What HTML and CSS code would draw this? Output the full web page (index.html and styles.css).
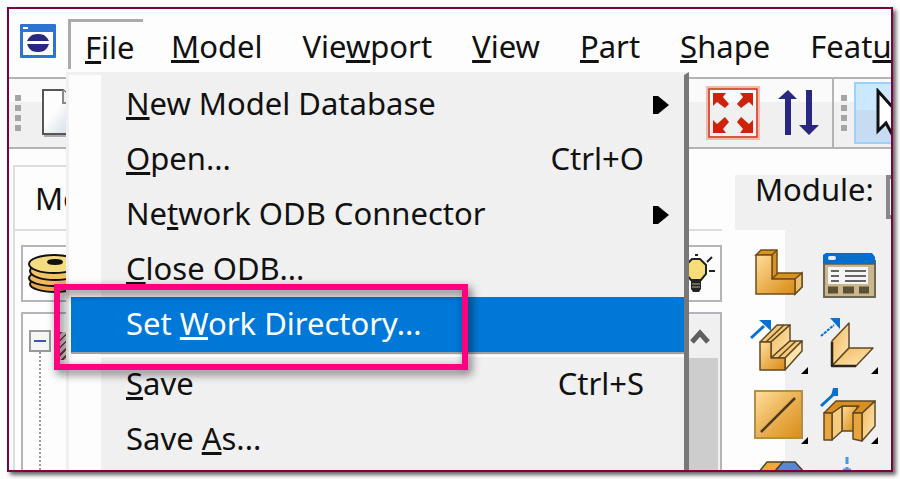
FILE: index.html
```html
<!DOCTYPE html>

<html lang="en">
  <head>
    <meta charset="utf-8" />
    <title>File menu</title>
    <link rel="stylesheet" href="styles.css">
  </head>
  <body>
    <div class="window">
      <div class="title-edge"></div>

      <nav class="menubar">
        <svg class="app-icon" width="36" height="34" viewBox="0 0 36 34">
          <rect width="36" height="34" rx="1" fill="#2d74d0"/>
          <rect x="3" y="8" width="30" height="23" fill="#fdfdfd"/>
          <rect x="3" y="3" width="5" height="2" fill="#fff"/>
          <path d="M7 17 Q8 14 12 11 Q18 9 24 11 Q28 14 29 17Z M7 20 Q8 24 12 27 Q18 29 24 27 Q28 24 29 20Z" fill="#29277f"/>
        </svg>
        <div class="menu-open">
          <button class="menu-title"><u>F</u>ile</button>
          <div class="dropdown">
            <button class="item"><span><u>N</u>ew Model Database</span><svg class="sub" width="16" height="18" viewBox="0 0 16 18"><path d="M0 0H5L16 9L5 18H0Z"/></svg></button>
            <button class="item"><span><u>O</u>pen...</span><span>Ctrl+O</span></button>
            <button class="item"><span>Ne<u>t</u>work ODB Connector</span><svg class="sub" width="16" height="18" viewBox="0 0 16 18"><path d="M0 0H5L16 9L5 18H0Z"/></svg></button>
            <button class="item"><span><u>C</u>lose ODB...</span></button>
            <div class="item-wrap">
              <button class="item selected"><span>Set <u>W</u>ork Directory...</span></button>
              <div class="callout"></div>
            </div>
            <div class="separator"></div>
            <button class="item"><span><u>S</u>ave</span><span>Ctrl+S</span></button>
            <button class="item"><span>Save <u>A</u>s...</span></button>
          </div>
        </div>
        <button class="menu-title"><u>M</u>odel</button>
        <button class="menu-title">Vie<u>w</u>port</button>
        <button class="menu-title"><u>V</u>iew</button>
        <button class="menu-title"><u>P</u>art</button>
        <button class="menu-title"><u>S</u>hape</button>
        <button class="menu-title">Feat<u>u</u>re</button>
      </nav>

      <div class="toolbar">
        <div class="tools-file">
          <span class="grip"></span>
          <button class="tool" aria-label="New">
            <svg width="40" height="50" viewBox="0 0 40 50">
              <defs><linearGradient id="paper" x1="0" y1="0" x2="1" y2="1"><stop offset=".4" stop-color="#fdfdfd"/><stop offset="1" stop-color="#c8d4e2"/></linearGradient></defs>
              <path d="M2 2H22L36 16V46H2Z" fill="url(#paper)" stroke="#555" stroke-width="2"/>
              <path d="M22 2V15H36" fill="#eee" stroke="#888" stroke-width="2"/>
              <path d="M3 48H38" stroke="#aaa" stroke-width="2"/>
            </svg>
          </button>
        </div>
        <div class="tools-view">
          <button class="tool" aria-label="Fit view">
            <svg width="54" height="54" viewBox="0 0 54 54">
              <rect x="2" y="2" width="50" height="50" fill="none" stroke="#f7b9ac" stroke-width="4"/>
              <rect x="3" y="3" width="48" height="48" fill="none" stroke="#cc3a22" stroke-width="1.5"/>
              <g fill="#cc240a">
                <path d="M7 7H20L17 11L23 18L19 22L11 16L7 20Z"/>
                <path d="M47 7H34L37 11L31 18L35 22L43 16L47 20Z"/>
                <path d="M7 47H20L17 43L23 36L19 31L11 38L7 34Z"/>
                <path d="M47 47H34L37 43L31 36L35 31L43 38L47 34Z"/>
              </g>
            </svg>
          </button>
          <button class="tool" aria-label="Cycle view">
            <svg width="42" height="46" viewBox="0 0 42 46" fill="#29277f">
              <path d="M10 0L19 9H13V45H7V9H0Z"/>
              <path d="M28 0H34V35H41L31 45L21 35H28Z"/>
            </svg>
          </button>
        </div>
        <div class="tools-select">
          <span class="grip"></span>
          <button class="tool-active" aria-label="Select">
            <svg width="34" height="50" viewBox="0 0 34 50"><path d="M2 3V43L10 35L17 48L23 45L17 32H28Z" fill="#fff" stroke="#111" stroke-width="3"/></svg>
          </button>
        </div>
      </div>

      <div class="workspace">
        <div class="tree-side">
          <div class="tabs"><a class="tab" href="#">Model</a></div>
          <div class="tree-panel">
            <div class="tree-tools">
              <svg width="50" height="42" viewBox="0 0 50 42" stroke="#111" stroke-width="2">
                <ellipse cx="27" cy="31" rx="25" ry="8" fill="#e9aa4b"/>
                <ellipse cx="26" cy="25" rx="25" ry="8" fill="#f0b860"/>
                <ellipse cx="27" cy="18" rx="25" ry="9" fill="#f2c465"/>
                <ellipse cx="26" cy="11" rx="25" ry="9" fill="#f5dc82"/>
                <ellipse cx="27" cy="9" rx="7" ry="2" fill="#111"/>
              </svg>
              <svg width="42" height="40" viewBox="0 0 42 40">
                <path d="M14 5H22L28 11V20L23 26H13L8 20V11Z" fill="#f8dc78" stroke="#222" stroke-width="2"/>
                <path d="M13 27H23V35L21 38H15L13 35Z" fill="#222"/>
                <path d="M14 30H22M14 33H22" stroke="#aab59a" stroke-width="1"/>
                <path d="M17 1H20M29 8L34 3M31 17H37" stroke="#222" stroke-width="2"/>
              </svg>
            </div>
            <div class="tree">
              <div class="branch">
                <button class="expander" aria-label="Collapse"></button>
                <span class="stem"></span>
              </div>
              <span class="hatch"></span>
              <div class="scrollbar">
                <svg width="20" height="18" viewBox="0 0 20 18"><path d="M2 14L10 5L18 14" fill="none" stroke="#606060" stroke-width="5"/></svg>
                <div class="thumb"></div>
              </div>
            </div>
          </div>
        </div>

        <div class="module-side">
          <div class="module-bar">
            <label for="module">Module:</label>
            <select id="module"><option></option></select>
          </div>
          <div class="toolbox">
            <svg class="hidden-defs" width="0" height="0">
              <defs>
                <linearGradient id="gold" x1="0" y1="0" x2="1" y2="1"><stop offset="0" stop-color="#ffdf9c"/><stop offset=".5" stop-color="#ebb254"/><stop offset="1" stop-color="#d98b17"/></linearGradient>
                <linearGradient id="pale" x1="0" y1="0" x2="1" y2="1"><stop offset="0" stop-color="#f0b75c"/><stop offset="1" stop-color="#ffe9b8"/></linearGradient>
              </defs>
            </svg>
            <button class="part-tool" aria-label="Create part">
              <svg viewBox="0 0 70 70" stroke="#6f4c1b" stroke-width="1.5">
                <path d="M11 18L16 13H32V36H57V50L50 57V42H27V18Z" fill="#d9921f"/>
                <path d="M50 42L57 36V50L50 57Z" fill="#f0bf6b"/>
                <path d="M11 18H27V42H50V57H11Z" fill="url(#gold)"/>
                <path d="M27 18L32 13M27 42L33 36" fill="none"/>
              </svg>
            </button>
            <button class="part-tool" aria-label="Part manager">
              <svg viewBox="0 0 70 70">
                <rect x="9" y="24" width="51" height="36" fill="#c9b78e" stroke="#6e6654" stroke-width="2"/>
                <path d="M8 27V18L11 16H57L60 20V27Z" fill="#006fcf"/>
                <path d="M8 27H60" stroke="#5b5d55" stroke-width="1.5"/>
                <rect x="13" y="19" width="8" height="4" rx="2" fill="#e6f2ff"/>
                <rect x="13" y="30" width="40" height="17" fill="#f5f5f5"/>
                <path d="M16 34H24M30 34H51M16 39H24M30 39H51M16 44H24M30 44H51" stroke="#666" stroke-width="2"/>
                <path d="M13 53H23M28 53H39M44 53H54" stroke="#5a5232" stroke-width="7"/>
              </svg>
            </button>
            <button class="part-tool" aria-label="Solid extrude">
              <svg viewBox="0 0 70 70" stroke="#604824" stroke-width="1.5" stroke-linejoin="round">
                <path d="M15 35L32 18H45L26 35Z" fill="#f3c878"/>
                <path d="M26 35L45 18V34L26 51Z" fill="url(#pale)"/>
                <path d="M26 51L45 34H57L40 51Z" fill="#f5ca7b"/>
                <path d="M40 51L57 34V44L40 63Z" fill="#ffe3ab"/>
                <path d="M15 35H26V51H40V63H15Z" fill="url(#gold)"/>
                <path d="M21 35L39 18M33 51L51 34" fill="none"/>
                <path d="M6 31L19 19" stroke="#0870ce" stroke-width="3"/>
                <path d="M14 13H26V24Z" fill="#0870ce" stroke="none"/>
                <path d="M56 67L63 60V67Z" fill="#000" stroke="none"/>
              </svg>
            </button>
            <button class="part-tool" aria-label="Shell extrude">
              <svg viewBox="0 0 70 70" stroke="#604824" stroke-width="1.5" stroke-linejoin="round">
                <path d="M17 34L34 16V41L17 59Z" fill="url(#pale)"/>
                <path d="M17 59L34 41H58L41 59Z" fill="url(#pale)"/>
                <path d="M17 35V59H41" fill="none" stroke="#29251e" stroke-width="2.5"/>
                <path d="M6 29L19 18" stroke="#0870ce" stroke-width="2" stroke-dasharray="3 1"/>
                <path d="M15 11H25V22Z" fill="#0870ce" stroke="none"/>
                <path d="M56 67L63 60V67Z" fill="#000" stroke="none"/>
              </svg>
            </button>
            <button class="part-tool" aria-label="Wire">
              <svg viewBox="0 0 70 70">
                <rect x="10" y="14" width="47" height="47" fill="url(#gold)" stroke="#b58c48" stroke-width="2"/>
                <path d="M16 55L50 21" stroke="#4b3a20" stroke-width="2.5"/>
                <path d="M56 67L63 60V67Z" fill="#000"/>
              </svg>
            </button>
            <button class="part-tool" aria-label="Cut extrude">
              <svg viewBox="0 0 70 70" stroke="#604824" stroke-width="1.5" stroke-linejoin="round">
                <path d="M27 29H42V54H27Z" fill="url(#gold)"/>
                <path d="M17 36L27 29V54L17 63Z" fill="#f6cb7e"/>
                <path d="M47 36L60 24V49L47 64Z" fill="url(#pale)"/>
                <path d="M9 36L21 24H60L47 36H38L44 29H27L17 36Z" fill="#d98f20"/>
                <path d="M9 36H17V63H9Z" fill="#e9a53c"/>
                <path d="M38 36H47V64L38 62Z" fill="#e9a53c"/>
                <path d="M6 29L19 17" stroke="#0870ce" stroke-width="3"/>
                <path d="M18 11H23V19H16Z" fill="#0870ce" stroke="none"/>
                <path d="M56 67L63 60V67Z" fill="#000" stroke="none"/>
              </svg>
            </button>
            <button class="part-tool" aria-label="Partition">
              <svg viewBox="0 0 70 70" stroke="#4a4034" stroke-width="1.5">
                <path d="M13 26L22 15H38L25 30Z" fill="#eba93f"/>
                <path d="M25 30L38 15H50L60 26L50 34Z" fill="#5688cf"/>
              </svg>
            </button>
            <button class="part-tool" aria-label="Datum">
              <svg viewBox="0 0 70 70"><path d="M32 10V17M32 20V30M28 23H36" stroke="#4798df" stroke-width="3"/></svg>
            </button>
          </div>
        </div>
      </div>
    </div>
  </body>
</html>
```
FILE: styles.css
```css
* {
  box-sizing: border-box;
}

body {
  margin: 0;
  padding: 7px;
  background-color: #fdfdfd;
  color: #111;
  font-family: "Noto Sans", sans-serif;
  font-size: 31px;
  line-height: 40px;
}

button {
  padding: 0;
  border: 0;
  background: none;
  color: inherit;
  font: inherit;
  white-space: nowrap;
}

svg {
  display: block;
  flex-shrink: 0;
}

u {
  text-decoration-thickness: 3px;
  text-underline-offset: 2px;
  text-decoration-skip-ink: none;
}

.window {
  display: flex;
  flex-direction: column;
  height: calc(100vh - 14px);
  border: 2px solid #7f0040;
  box-shadow: 3px 3px 4px rgba(0, 0, 0, 0.6);
  overflow: hidden;
}

.title-edge {
  flex: none;
  height: 5px;
  border-bottom: 2px solid #f0f6fd;
}

/* menu bar */
.menubar {
  display: flex;
  flex: none;
  height: 63px;
  padding-left: 11px;
  gap: 40px;
}

.menubar > .menu-title {
  height: 63px;
}

.app-icon {
  margin-top: 10px;
  margin-right: -28px;
}

.menu-open {
  position: relative;
  flex: none;
  width: 75px;
  height: 50px;
  margin-top: 5px;
  margin-right: -12px;
  padding: 5px 0 0 14px;
  border-left: 3px solid #aaa;
  border-top: 3px solid #aaa;
}

.dropdown {
  position: absolute;
  z-index: 2;
  top: 50px;
  left: -5px;
  width: 623px;
  height: 100vh;
  border: 3px solid #f0f0f0;
  border-right: 5px solid #777;
  padding: 2px 0 0 2px;
  background: linear-gradient(to right, #fdfdfd 32px, #f0f0f0 32px);
}

.item {
  display: flex;
  align-items: center;
  justify-content: space-between;
  width: 100%;
  height: 55px;
  padding: 0 40px 4px 55px;
}

.item .sub {
  margin: 4px -25px 0 0;
}

.item-wrap {
  position: relative;
}

.selected {
  background-color: #0078d7;
  color: #fff;
}

.callout {
  position: absolute;
  top: -13px;
  left: -17px;
  width: 414px;
  height: 86px;
  border: 6px solid #ff0080;
  filter: drop-shadow(3px 4px 5px rgba(0, 0, 0, 0.6));
  pointer-events: none;
}

.separator {
  height: 5px;
  border-top: 2px solid #a0a0a0;
  border-bottom: 2px solid #fdfdfd;
}

/* toolbar */
.toolbar {
  display: flex;
  flex: none;
  height: 72px;
  border-top: 2px solid #b4b4b4;
  border-bottom: 2px solid #b4b4b4;
  background: linear-gradient(#fafafa 23px, #f0f0f0 23px);
}

.tools-file,
.tools-view,
.tools-select {
  display: flex;
  align-items: center;
}

.tools-file {
  width: 697px;
  padding-left: 6px;
  gap: 20px;
}

.tools-view {
  gap: 18px;
  padding-right: 12px;
  border-right: 2px solid #b4b4b4;
}

.tools-select {
  flex: 1;
  padding-left: 7px;
  gap: 7px;
  min-width: 0;
}

.grip {
  flex: none;
  width: 6px;
  height: 36px;
  background: repeating-linear-gradient(#a5a5a5 0 6px, transparent 6px 10px);
}

.tool-active {
  flex: none;
  width: 60px;
  height: 62px;
  padding-left: 20px;
  border: 2px solid #99d1ff;
  background: linear-gradient(#cce8ff 45%, #c5dcf2 45%);
}

/* model tree and part tools */
.workspace {
  display: flex;
  flex: 1;
  min-height: 0;
  padding-left: 4px;
  gap: 13px;
}

.tree-side {
  display: flex;
  flex-direction: column;
  width: 709px;
  padding-top: 16px;
}

.tabs {
  flex: none;
  width: 200px;
  height: 64px;
  padding: 11px 0 0 20px;
  border-left: 2px solid #ddd;
  border-top: 2px solid #ddd;
}

.tab {
  color: inherit;
  text-decoration: none;
}

.tree-panel {
  flex: 1;
  padding: 14px 0 0 6px;
  border-left: 2px solid #ddd;
  border-top: 2px solid #ddd;
}

.tree-tools {
  display: flex;
  align-items: center;
  justify-content: space-between;
  height: 57px;
  margin-bottom: 10px;
  padding-left: 5px;
  border: 2px solid #b4b4ba;
}

.tree {
  display: flex;
  height: 200px;
  border: 2px solid #b4b4ba;
}

.branch {
  display: flex;
  flex-direction: column;
  align-items: center;
  width: 22px;
  margin: 16px 9px 0 6px;
}

.expander {
  flex: none;
  width: 22px;
  height: 22px;
  border: 2px solid #999;
  background: linear-gradient(#3c5aa0, #3c5aa0) center / 12px 2px no-repeat #f5f5f5;
}

.stem {
  flex: 1;
  border-left: 2px dotted #999;
}

.hatch {
  width: 14px;
  height: 28px;
  margin-top: 18px;
  background: repeating-linear-gradient(135deg, #8c3a35 0 2px, #ccc 2px 5px);
}

.scrollbar {
  width: 32px;
  margin-left: auto;
  padding-right: 2px;
  background-color: #f0f0f0;
}

.scrollbar svg {
  margin: 14px 0 12px 2px;
}

.thumb {
  height: 160px;
  background-color: #cdcdcd;
}

.module-side {
  flex: 1;
  min-width: 0;
  padding-top: 26px;
}

.module-bar {
  display: flex;
  height: 55px;
  padding-left: 20px;
  gap: 12px;
  background-color: #f0f0f0;
}

.module-bar label {
  line-height: 28px;
}

.module-bar select {
  flex: none;
  width: 120px;
  height: 44px;
  border: 4px solid #888;
  background-color: #fff;
}

.toolbox {
  display: grid;
  grid-template-columns: 70px 70px;
  grid-auto-rows: 70px;
  padding: 7px 0 0 10px;
  background: linear-gradient(to right, #fdfdfd 50px, #f0f0f0 50px);
}

.hidden-defs {
  position: absolute;
}
```
